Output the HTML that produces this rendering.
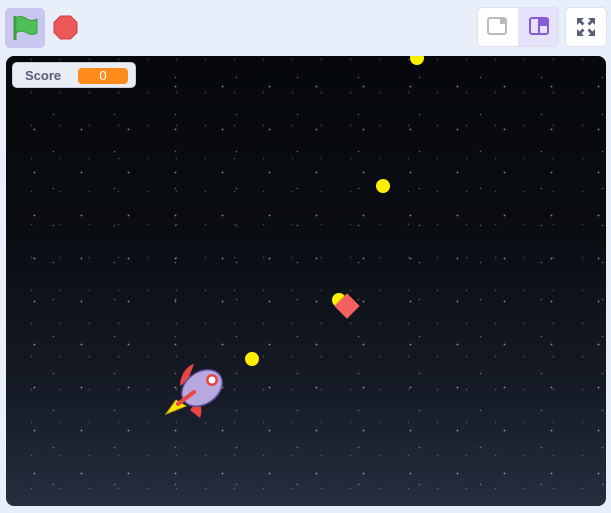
<!DOCTYPE html>
<html><head><style>
html,body{margin:0;padding:0;width:611px;height:513px;background:#e8effb;overflow:hidden;font-family:"Liberation Sans",sans-serif}
.btn{position:absolute}
#stage{position:absolute;left:6px;top:56px;width:600px;height:450px;border-radius:8px;overflow:hidden;
background:linear-gradient(180deg,#06080b 0%,#0a0d12 40%,#151b26 75%,#252e3e 100%)}
#stars{position:absolute;left:0;top:0;width:600px;height:450px;
background-image:radial-gradient(circle,rgba(255,255,255,.5) 0.7px,transparent 1.1px),radial-gradient(circle,rgba(255,255,255,.35) 0.6px,transparent 1px),radial-gradient(circle,rgba(255,255,255,.25) 0.6px,transparent 1px);
background-size:47px 43px,61px 37px,29px 33px;background-position:5px 9px,17px 3px,11px 20px}
.score{position:absolute;left:6px;top:6px;width:124px;height:26px;background:#e8ecf3;border-radius:5px;border:1px solid #c8d0dc;box-sizing:border-box}
.score span.l{position:absolute;left:12px;top:5px;font-size:13px;font-weight:bold;color:#575e75}
.score span.v{position:absolute;left:65px;top:5px;width:50px;height:16px;background:#ff8c1a;border-radius:4px;color:#fff;font-size:13px;text-align:center;line-height:16px}
.dot{position:absolute;width:14px;height:14px;border-radius:50%;background:#ffef00}
</style></head><body>
<div class="btn" style="left:5px;top:8px;width:40px;height:40px;background:#c9c7f0;border-radius:5px"></div>
<svg class="btn" style="left:12px;top:14px" width="28" height="28" viewBox="0 0 28 28"><path d="M3 2v24" stroke="#3f9c3a" stroke-width="3"/><path d="M4 4c4-3 8-1 11 1s7 2 10 0v14c-3 2-7 2-10 0s-7-3-11 0z" fill="#4cbf56" stroke="#3f9c3a" stroke-width="1"/></svg>
<svg class="btn" style="left:53px;top:15px" width="25" height="25" viewBox="0 0 25 25"><polygon points="7.5,1 17.5,1 24,7.5 24,17.5 17.5,24 7.5,24 1,17.5 1,7.5" fill="#ec5959" stroke="#c94040" stroke-width="1"/></svg>
<div class="btn" style="left:477px;top:7px;width:82px;height:40px;border:1px solid #d9e0ec;border-radius:5px;background:#fff;box-sizing:border-box"></div>
<div class="btn" style="left:518px;top:8px;width:40px;height:38px;background:#e6e2fb;border-radius:0 4px 4px 0"></div>
<svg class="btn" style="left:487px;top:17px" width="20" height="18"><rect x="1" y="1" width="18" height="16" rx="2" fill="none" stroke="#bbb" stroke-width="2"/><rect x="13" y="2" width="5" height="5" fill="#bbb"/></svg>
<svg class="btn" style="left:529px;top:17px" width="20" height="18"><rect x="1" y="1" width="18" height="16" rx="2" fill="none" stroke="#855cd6" stroke-width="2"/><rect x="9" y="1" width="2" height="16" fill="#855cd6"/><rect x="10" y="2" width="8" height="7" fill="#855cd6"/></svg>
<div class="btn" style="left:565px;top:7px;width:42px;height:40px;border:1px solid #d9e0ec;border-radius:5px;background:#fff;box-sizing:border-box"></div>
<svg class="btn" style="left:576px;top:17px" width="20" height="20" viewBox="0 0 20 20" fill="#575e75"><path d="M1 1h7l-2.5 2.5 3 3-2 2-3-3L1 8z"/><path d="M19 1h-7l2.5 2.5-3 3 2 2 3-3L19 8z"/><path d="M1 19h7l-2.5-2.5 3-3-2-2-3 3L1 12z"/><path d="M19 19h-7l2.5-2.5-3-3 2-2 3 3L19 12z"/></svg>
<div id="stage"><div id="stars"></div>
<div class="score"><span class="l">Score</span><span class="v">0</span></div>
<div class="dot" style="left:404px;top:-5px"></div>
<div class="dot" style="left:370px;top:123px"></div>
<div class="dot" style="left:326px;top:237px"></div>
<div class="dot" style="left:239px;top:296px"></div>
<div style="position:absolute;left:332px;top:241px;width:18px;height:18px;background:#f26060;transform:rotate(45deg)"></div>
<svg style="position:absolute;left:152px;top:302px" width="76" height="62" viewBox="0 0 76 62">
<path d="M8 56l10-14 10 6z" fill="#ffe600" stroke="#c9a800"/>
<path d="M22 28c0-10 6-20 14-22l-6 16z" fill="#e84545"/>
<path d="M40 42c4 6 4 12 2 18l-10-8z" fill="#e84545"/>
<ellipse cx="44" cy="30" rx="22" ry="16" transform="rotate(-35 44 30)" fill="#b8a8e0" stroke="#5a4a9a" stroke-width="1.5"/>
<circle cx="54" cy="22" r="6" fill="#e84545"/><circle cx="54" cy="22" r="3.5" fill="#fff"/>
<path d="M20 46l16-12" stroke="#e84545" stroke-width="4" stroke-linecap="round"/>
</svg>
</div>
</body></html>
